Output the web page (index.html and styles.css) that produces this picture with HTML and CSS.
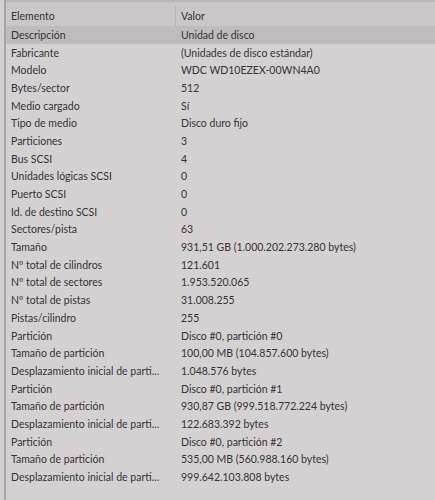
FILE: index.html
```html
<!DOCTYPE html>
<html lang="es">
<head>
<meta charset="utf-8">
<link rel="stylesheet" href="styles.css">
</head>
<body>
<div class="list">
  <div class="row head"><div class="c1">Elemento</div><div class="c2">Valor</div></div>
  <div class="row sel"><div class="c1">Descripción</div><div class="c2">Unidad de disco</div></div>
  <div class="row"><div class="c1">Fabricante</div><div class="c2">(Unidades de disco estándar)</div></div>
  <div class="row"><div class="c1">Modelo</div><div class="c2">WDC WD10EZEX-00WN4A0</div></div>
  <div class="row"><div class="c1">Bytes/sector</div><div class="c2">512</div></div>
  <div class="row"><div class="c1">Medio cargado</div><div class="c2">Sí</div></div>
  <div class="row"><div class="c1">Tipo de medio</div><div class="c2">Disco duro fijo</div></div>
  <div class="row"><div class="c1">Particiones</div><div class="c2">3</div></div>
  <div class="row"><div class="c1">Bus SCSI</div><div class="c2">4</div></div>
  <div class="row"><div class="c1">Unidades lógicas SCSI</div><div class="c2">0</div></div>
  <div class="row"><div class="c1">Puerto SCSI</div><div class="c2">0</div></div>
  <div class="row"><div class="c1">Id. de destino SCSI</div><div class="c2">0</div></div>
  <div class="row"><div class="c1">Sectores/pista</div><div class="c2">63</div></div>
  <div class="row"><div class="c1">Tamaño</div><div class="c2">931,51 GB (1.000.202.273.280 bytes)</div></div>
  <div class="row"><div class="c1">Nº total de cilindros</div><div class="c2">121.601</div></div>
  <div class="row"><div class="c1">Nº total de sectores</div><div class="c2">1.953.520.065</div></div>
  <div class="row"><div class="c1">Nº total de pistas</div><div class="c2">31.008.255</div></div>
  <div class="row"><div class="c1">Pistas/cilindro</div><div class="c2">255</div></div>
  <div class="row"><div class="c1">Partición</div><div class="c2">Disco #0, partición #0</div></div>
  <div class="row"><div class="c1">Tamaño de partición</div><div class="c2">100,00 MB (104.857.600 bytes)</div></div>
  <div class="row"><div class="c1">Desplazamiento inicial de parti...</div><div class="c2">1.048.576 bytes</div></div>
  <div class="row"><div class="c1">Partición</div><div class="c2">Disco #0, partición #1</div></div>
  <div class="row"><div class="c1">Tamaño de partición</div><div class="c2">930,87 GB (999.518.772.224 bytes)</div></div>
  <div class="row"><div class="c1">Desplazamiento inicial de parti...</div><div class="c2">122.683.392 bytes</div></div>
  <div class="row"><div class="c1">Partición</div><div class="c2">Disco #0, partición #2</div></div>
  <div class="row"><div class="c1">Tamaño de partición</div><div class="c2">535,00 MB (560.988.160 bytes)</div></div>
  <div class="row"><div class="c1">Desplazamiento inicial de parti...</div><div class="c2">999.642.103.808 bytes</div></div>
</div>
</body>
</html>
```
FILE: styles.css
```css
html, body {
  margin: 0;
  padding: 0;
  background: #d4d0d2;
}
body {
  width: 435px;
  height: 500px;
  overflow: hidden;
  font-family: Lato, "Noto Sans", sans-serif;
  font-size: 10.5px;
  color: #353236;
}
.list {
  margin-left: 4px;
  border-left: 2px solid #a8a4a7;
  height: 500px;
  background: #d5d1d3;
}
.row {
  display: flex;
  height: 17.7px;
  align-items: center;
  white-space: nowrap;
}
.c1 {
  width: 170px;
  flex: none;
  padding-left: 5px;
  box-sizing: border-box;
  overflow: hidden;
}
.c2 {
  padding-left: 5px;
}
.head {
  height: 26px;
  background: #cbc7c9;
  border-top: 2px solid #bab6b8;
  box-sizing: border-box;
  padding-top: 4px;
}
.head .c1 {
  height: 100%;
  display: flex;
  align-items: center;
  border-right: 1px solid #b7b3b5;
}
.sel {
  background: #c0bcbe;
}
```
